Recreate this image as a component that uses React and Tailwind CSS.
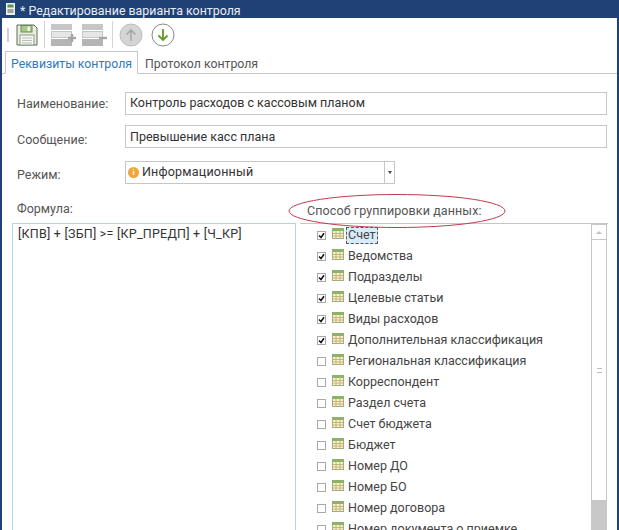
const groupings = [
  { name: 'Счет', checked: true, focused: true },
  { name: 'Ведомства', checked: true },
  { name: 'Подразделы', checked: true },
  { name: 'Целевые статьи', checked: true },
  { name: 'Виды расходов', checked: true },
  { name: 'Дополнительная классификация', checked: true },
  { name: 'Региональная классификация' },
  { name: 'Корреспондент' },
  { name: 'Раздел счета' },
  { name: 'Счет бюджета' },
  { name: 'Бюджет' },
  { name: 'Номер ДО' },
  { name: 'Номер БО' },
  { name: 'Номер договора' },
  { name: 'Номер документа о приемке' },
];

// Floppy disk
const SaveIcon = () => (
  <svg width="22" height="22" viewBox="0 0 22 22">
    <path d="M1 1h17l3 3v17H1z" fill="#e9efd9" stroke="#5c6b5c" />
    <rect x="5" y="1.5" width="11" height="6.5" fill="#a9c98a" stroke="#6f8a60" />
    <rect x="11.5" y="2.5" width="2.5" height="4.5" fill="#f4f7ee" />
    <rect x="4" y="11" width="14" height="10" fill="#f8f8f2" stroke="#8b9a8b" />
    <path d="M6 14h10M6 16.5h10M6 19h10" stroke="#b8bdb8" />
  </svg>
);

// Row stack with a plus or minus at the side
const RowsIcon = ({ minus }) => (
  <svg width="25" height="22" viewBox="0 0 25 22">
    <rect x="0" y="0" width="21" height="6" fill="#c6c6c6" />
    <rect x="0.5" y="7.5" width="20" height="6" fill="#e6e6e6" stroke="#c4c4c4" />
    <rect x="0" y="15" width="21" height="7" fill="#b4b4b4" />
    <path d="M17 14h8" stroke="#a5a5a5" strokeWidth="2.4" />
    {!minus && <path d="M21 10v8" stroke="#a5a5a5" strokeWidth="2.4" />}
  </svg>
);

const RoundArrow = ({ up }) => (
  <svg width="24" height="24" viewBox="0 0 24 24">
    <circle cx="12" cy="12" r="11" fill={up ? '#d4d4d4' : '#ffffff'} stroke={up ? '#bcbcbc' : '#8a8a8a'} />
    {up ? (
      <path d="M12 18V7M7.5 11.5 12 7l4.5 4.5" fill="none" stroke="#a8a8a8" strokeWidth="1.6" />
    ) : (
      <path d="M12 6v11M7.5 12.5 12 17l4.5-4.5" fill="none" stroke="#5f9a24" strokeWidth="1.8" />
    )}
  </svg>
);

const TableIcon = () => (
  <svg width="12" height="11" viewBox="0 0 12 11" className="shrink-0">
    <rect x="0.5" y="0.5" width="11" height="10" fill="#faf0c8" stroke="#a3ad82" />
    <rect x="0" y="0" width="12" height="3" fill="#8db36b" />
    <path d="M4 3v7M8 3v7M1 5.5h10M1 8h10" stroke="#b8a870" strokeWidth="0.8" />
  </svg>
);

const CheckBox = ({ checked }) => (
  <span className="flex h-[9px] w-[9px] shrink-0 items-center justify-center border border-[#a8a8a8] bg-white">
    {checked && (
      <svg width="7" height="7" viewBox="0 0 7 7">
        <path d="M1 3.5 3 5.5 6 1.2" fill="none" stroke="#111" strokeWidth="1.5" />
      </svg>
    )}
  </span>
);

const FieldRow = ({ label, value, className, labelClass, valueClass = '' }) => (
  <div className={`flex items-start ${className}`}>
    <span className={`h-[23px] w-[108px] shrink-0 text-[#555] ${labelClass}`}>{label}</span>
    <div className={`flex h-[23px] w-[482px] items-center border border-[#c6c6c6] px-1 text-[#333] ${valueClass}`}>{value}</div>
  </div>
);

export default function App() {
  return (
    <div className="flex h-[530px] w-[619px] flex-col overflow-hidden bg-[#1f4176] font-['Roboto',sans-serif] text-[12.5px]">
      {/* Title bar */}
      <div className="flex h-[18px] shrink-0 items-center gap-[5px] pl-[6px] pt-[4px] text-[12.4px] text-[#e8edf5]">
        <svg width="9" height="12" viewBox="0 0 9 12" className="-mt-[4px]">
          <rect x="0" y="0" width="9" height="12" fill="#eef2ee" />
          <rect x="1.5" y="1.5" width="6" height="3" fill="#4f9a4f" />
          <path d="M1.5 7h6M1.5 9h6" stroke="#555" />
        </svg>
        <span>* Редактирование варианта контроля</span>
      </div>

      <div className="mx-[2px] flex min-h-0 flex-1 flex-col bg-white">
        {/* Toolbar */}
        <div className="flex h-[33px] shrink-0 items-center pl-[5px]">
          <div className="h-[14px] w-[2px] bg-[#d0d0d0]" />
          <div className="ml-[7px] mr-[6px]"><SaveIcon /></div>
          <div className="h-[27px] w-px bg-[#d4d4d4]" />
          <div className="ml-[6px]"><RowsIcon /></div>
          <div className="ml-[6px]"><RowsIcon minus /></div>
          <div className="ml-[5px] h-[27px] w-px bg-[#d4d4d4]" />
          <div className="ml-[6px]"><RoundArrow up /></div>
          <div className="ml-[8px]"><RoundArrow /></div>
        </div>

        {/* Tabs */}
        <div className="flex h-[23px] shrink-0 items-end border-b border-[#c6c6c6] pl-[3px] text-[12.3px]">
          <div className="-mb-px flex h-[23px] items-center border border-[#c6c6c6] border-b-white bg-white px-[5px] pt-[4px] text-[#2f7ab8]">
            Реквизиты контроля
          </div>
          <div className="flex h-[22px] items-center px-[7px] pt-[4px] text-[#555]">Протокол контроля</div>
        </div>

        {/* Form */}
        <div className="flex min-h-0 flex-1 flex-col pl-[15px]">
          <FieldRow label="Наименование:" value="Контроль расходов с кассовым планом" className="mt-[18px]" labelClass="pt-[3px]" />
          <FieldRow label="Сообщение:" value="Превышение касс плана" className="mt-[10px]" labelClass="pt-[6px]" valueClass="pt-[2px]" />
          <div className="mt-[13px] flex items-start">
            <span className="h-[23px] w-[108px] shrink-0 pt-[5px] text-[#555]">Режим:</span>
            <div className="flex h-[23px] w-[270px] items-center border border-[#c6c6c6] text-[#333]">
              <span className="ml-[2px] mr-[3px] flex h-[11px] w-[11px] items-center justify-center rounded-full bg-[#f0a63a] text-[8px] font-bold leading-none text-white">i</span>
              <span className="flex-1 tracking-[0.2px]">Информационный</span>
              <div className="flex h-full w-[10px] items-center justify-center border-l border-[#c6c6c6]">
                <span className="border-x-[2.5px] border-t-[3px] border-x-transparent border-t-[#444]" />
              </div>
            </div>
          </div>

          <div className="relative mt-[15px] flex h-[24px] shrink-0">
            <span className="w-[290px] pt-px text-[#555]">Формула:</span>
            <span className="pt-[3px] tracking-[0.1px] text-[#555]">Способ группировки данных:</span>
            {/* Red hand-drawn ellipse over the label */}
            <svg width="220" height="36" viewBox="0 0 220 36" className="absolute left-[270px] top-[-6px]">
              <ellipse cx="110" cy="18" rx="108" ry="16.5" fill="none" stroke="#c23a4c" strokeWidth="1" />
            </svg>
          </div>

          <div className="flex min-h-0 flex-1">
            <div className="-ml-[5px] w-[284px] shrink-0 border-x border-t border-[#b9d0e6] px-[5px] pt-[1px] tracking-[0.23px] text-[#333]">
              [КПВ] + [ЗБП] &gt;= [КР_ПРЕДП] + [Ч_КР]
            </div>
            <div className="ml-[4px] flex w-[308px] border-t border-[#c6c6c6]">
              <div className="min-w-0 flex-1 overflow-hidden pt-px">
                {groupings.map((item) => (
                  <div key={item.name} className="flex h-[21px] items-center pl-[17px] text-[#444]">
                    <CheckBox checked={item.checked} />
                    <span className="mb-[4px] ml-[6px] flex"><TableIcon /></span>
                    <span className={`ml-[2px] flex h-[17px] items-center whitespace-nowrap ${item.focused ? 'border border-dashed border-[#555] bg-[#d7ebf9] px-px' : 'px-[2px]'}`}>
                      {item.name}
                    </span>
                  </div>
                ))}
              </div>
              {/* Scrollbar */}
              <div className="flex w-[16px] shrink-0 flex-col bg-[#c8c8c8]">
                <div className="flex h-[16px] items-center justify-center border border-[#c6c6c6] bg-white">
                  <span className="border-x-[3px] border-b-[3px] border-x-transparent border-b-[#c0c0c0]" />
                </div>
                <div className="flex h-[261px] items-center justify-center border border-t-0 border-[#c6c6c6] bg-white">
                  <span className="h-[5px] w-[5px] border-y border-[#c0c0c0]" />
                </div>
              </div>
              <div className="w-px shrink-0" />
            </div>
          </div>
        </div>
      </div>
    </div>
  );
}
